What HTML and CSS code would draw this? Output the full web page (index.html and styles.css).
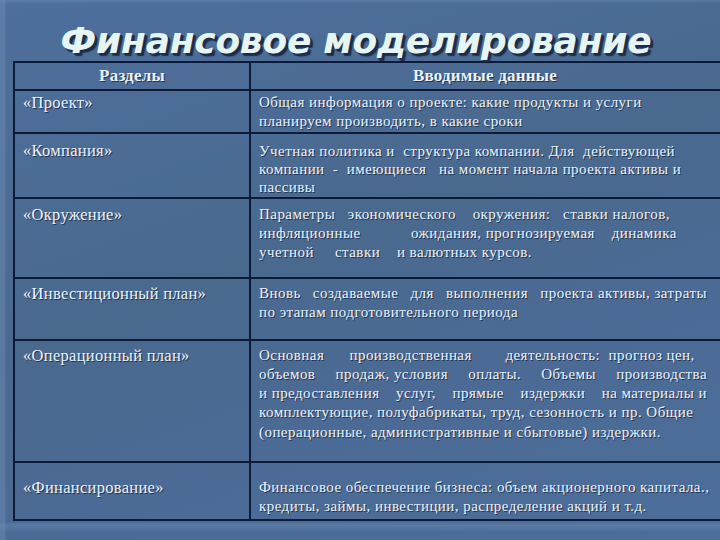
FILE: index.html
```html
<!DOCTYPE html>
<html lang="ru">
<head>
<meta charset="utf-8">
<title>Финансовое моделирование</title>
<link rel="stylesheet" href="styles.css">
</head>
<body>
<div class="slide">
  <h1 class="title">Финансовое моделирование</h1>
  <div class="tablewrap">
    <table class="grid">
      <colgroup><col class="c1"><col class="c2"></colgroup>
      <tr class="head">
        <th>Разделы</th>
        <th>Вводимые данные</th>
      </tr>
      <tr class="r1">
        <td class="lc">«Проект»</td>
        <td><span class="ln">Общая информация о проекте: какие продукты и услуги</span><span class="ln">планируем производить, в какие сроки</span></td>
      </tr>
      <tr class="r2">
        <td class="lc">«Компания»</td>
        <td><span class="ln">Учетная политика и  структура компании. Для  действующей</span><span class="ln">компании  -  имеющиеся   на момент начала проекта активы и</span><span class="ln">пассивы</span></td>
      </tr>
      <tr class="r3">
        <td class="lc">«Окружение»</td>
        <td><span class="ln">Параметры   экономического    окружения:   ставки налогов,</span><span class="ln">инфляционные            ожидания, прогнозируемая    динамика</span><span class="ln">учетной     ставки    и валютных курсов.</span></td>
      </tr>
      <tr class="r4">
        <td class="lc">«Инвестиционный план»</td>
        <td><span class="jl"><span>Вновь</span> <span>создаваемые</span> <span>для</span> <span>выполнения</span> <span>проекта активы, затраты</span></span><span class="ln">по этапам подготовительного периода</span></td>
      </tr>
      <tr class="r5">
        <td class="lc">«Операционный план»</td>
        <td><span class="ln">Основная      производственная        деятельность:  прогноз цен,</span><span class="jl"><span>объемов</span> <span>продаж, условия</span> <span>оплаты.</span> <span>Объемы</span> <span>производства</span></span><span class="jl"><span>и предоставления</span> <span>услуг,</span> <span>прямые</span> <span>издержки</span> <span>на материалы и</span></span><span class="ln">комплектующие, полуфабрикаты, труд, сезонность и пр. Общие</span><span class="ln">(операционные, административные и сбытовые) издержки.</span></td>
      </tr>
      <tr class="r6">
        <td class="lc">«Финансирование»</td>
        <td><span class="ln">Финансовое обеспечение бизнеса: объем акционерного капитала.,</span><span class="ln">кредиты, займы, инвестиции, распределение акций и т.д.</span></td>
      </tr>
    </table>
  </div>
</div>
</body>
</html>
```
FILE: styles.css
```css
html, body {
  margin: 0;
  padding: 0;
}
body {
  width: 720px;
  height: 540px;
  overflow: hidden;
  background: #4a6b97;
}
.slide {
  width: 720px;
  height: 540px;
  overflow: hidden;
  background:
    linear-gradient(90deg, rgba(120,150,190,0.35) 0, rgba(120,150,190,0.35) 5px, transparent 6px),
    linear-gradient(180deg, rgba(130,160,200,0.3) 0, transparent 4px),
    linear-gradient(180deg, transparent 522px, rgba(120,150,190,0.35) 525px, transparent 532px),
    linear-gradient(160deg, #4e6f9c 0%, #49698f 45%, #4b6b96 70%, #4d6e9a 100%);
}
.title {
  margin: 0;
  height: 61px;
  box-sizing: border-box;
  padding-top: 20px;
  text-align: center;
  font-family: "DejaVu Sans", "Liberation Sans", sans-serif;
  font-weight: bold;
  font-style: italic;
  font-size: 36px;
  line-height: 42px;
  letter-spacing: -0.25px;
  color: #e4f5f3;
  text-shadow: 2px 2px 0 #1b2c4d, 3px 3px 1px rgba(20,34,60,0.8);
  padding-right: 8px;
  white-space: nowrap;
}
.tablewrap {
  padding-left: 13px;
  width: 730px;
}
.grid {
  border-collapse: collapse;
  table-layout: fixed;
  width: 716px;
  font-family: "Liberation Serif", "DejaVu Serif", serif;
  font-size: 15px;
  letter-spacing: 0.45px;
  line-height: 19.3px;
  color: #eef3f8;
  text-shadow: 1px 1px 0 rgba(18,30,55,0.75);
}
.c1 { width: 236px; }
.c2 { width: 480px; }
.grid th, .grid td {
  border: 2px solid #0d1a38;
  padding: 0 14px 0 8px;
  text-align: left;
  vertical-align: top;
  box-sizing: border-box;
}
.grid td.lc {
  font-size: 16.5px;
  letter-spacing: 0.3px;
}
.grid th {
  font-weight: bold;
  text-align: center;
  vertical-align: middle;
  padding: 0;
  height: 28px;
  font-size: 17px;
  letter-spacing: 0.2px;
}
.grid th:last-child {
  padding-right: 10px;
}
.ln {
  display: block;
  white-space: pre;
}
.jl {
  display: flex;
  justify-content: space-between;
  width: 448px;
  white-space: nowrap;
}
.r1 td { height: 42px; padding-top: 2px; }
.r2 td { height: 65px; padding-top: 8px; line-height: 18.3px; }
.r3 td { height: 80px; padding-top: 6px; }
.r4 td { height: 62px; padding-top: 5px; }
.r5 td { height: 122px; padding-top: 5px; }
.r6 td { height: 58px; padding-top: 15px; }
```
